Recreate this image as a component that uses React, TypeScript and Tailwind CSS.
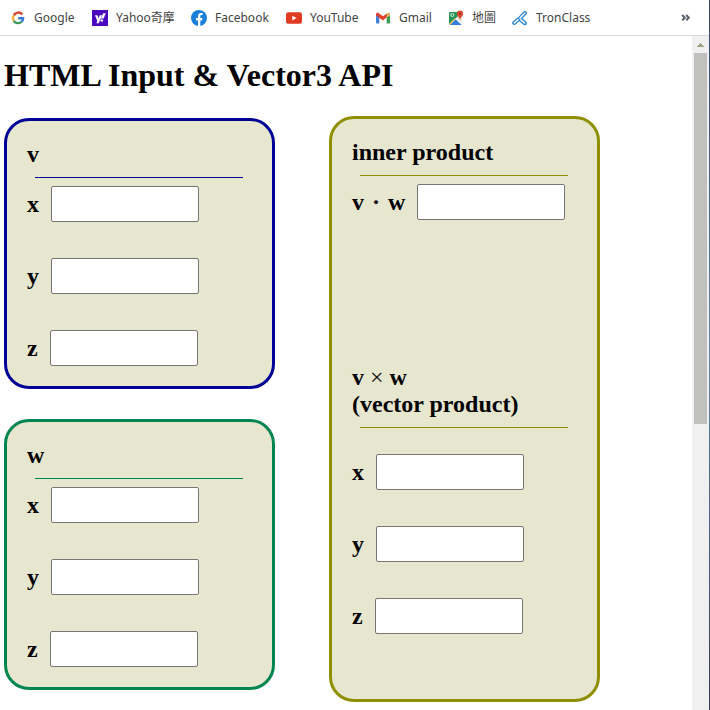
import type { ReactNode } from "react";

const GoogleIcon = () => (
  <svg width="16" height="16" viewBox="0 0 16 16" fill="none" strokeWidth="2.4">
    <path d="M12.2 4.4A5 5 0 0 0 3.8 5.4" stroke="#d8432f" />
    <path d="M3.8 5.4A5 5 0 0 0 3.8 10.8" stroke="#efb23a" />
    <path d="M3.8 10.8A5 5 0 0 0 11.3 11.9" stroke="#3d9a55" />
    <path d="M8.2 8.2H13.1C13.1 9.8 12.4 11.1 11.3 11.9" stroke="#3b78d8" />
  </svg>
);

const YahooIcon = () => (
  <svg width="16" height="16" viewBox="0 0 16 16">
    <rect width="16" height="16" fill="#4a08c0" />
    <path d="M3 5.3h2.4l1.2 3 1.2-3h2.3l-3.4 7.9H4.4l.9-2.1z" fill="#fff" />
    <path d="M11.2 3.2h2.6l-2.3 5.3H9z" fill="#fff" />
    <circle cx="9.8" cy="10.5" r="1.3" fill="#fff" />
  </svg>
);

const FacebookIcon = () => (
  <svg width="16" height="16" viewBox="0 0 16 16">
    <circle cx="8" cy="8" r="8" fill="#1a7fdb" />
    <path d="M7 16v-5.6H4.9V8H7V6.2C7 4.1 8.2 3 10 3l1.6.1v2h-1c-1 0-1.3.6-1.3 1.3V8h2.2l-.4 2.4H9.3V16z" fill="#fff" />
  </svg>
);

const YouTubeIcon = () => (
  <svg width="16" height="16" viewBox="0 0 16 16">
    <rect y="2.3" width="16" height="11.5" rx="2.4" fill="#e03a22" />
    <path d="M6.3 5.7v4.7l4.3-2.35z" fill="#fff" />
  </svg>
);

const GmailIcon = () => (
  <svg width="16" height="16" viewBox="0 0 16 16">
    <path d="M1 4.5l3.3 2.4v6.6H2a1 1 0 0 1-1-1z" fill="#3f80dd" />
    <path d="M15 4.5l-3.3 2.4v6.6H14a1 1 0 0 0 1-1z" fill="#3a9b50" />
    <path d="M1 4.5C1 2.7 2.6 2.3 3.8 3.2L8 6.3l4.2-3.1v3.9L8 10.6 1 5.4z" fill="#df4330" />
    <path d="M11.7 3.6l.6-.4C13.6 2.2 15 2.9 15 4.5v.8l-3.3 2.4z" fill="#e5b35c" />
  </svg>
);

const MapsIcon = () => (
  <svg width="16" height="16" viewBox="0 0 16 16">
    <rect x="1" y="2" width="13" height="13" rx="1" fill="#e5e4df" />
    <path d="M1 3a1 1 0 0 1 1-1h8v4L1 14.5z" fill="#279557" />
    <path d="M1.7 15l6-5.8 5.9 5.8z" fill="#347fe0" />
    <path d="M8.3 8.7l5.7 5.5" stroke="#fff" strokeWidth="1.1" />
    <path d="M1.2 14.5L7.5 8.4" stroke="#f4c553" strokeWidth="1.2" />
    <circle cx="4.3" cy="5" r="1.5" fill="none" stroke="#d5eddc" />
    <path d="M12 .6a3.1 3.1 0 0 0-3.1 3.2c0 2.6 2.6 3.1 3.1 6.4.5-3.3 3.1-3.8 3.1-6.4A3.1 3.1 0 0 0 12 .6z" fill="#dd4a31" />
    <circle cx="12" cy="3.8" r="1.1" fill="#963022" />
  </svg>
);

const TronIcon = () => (
  <svg width="16" height="16" viewBox="0 0 16 16" fill="none" strokeLinecap="round">
    <path d="M13 2.9L7.9 8.3M6.4 9.3L2.2 13M8.6 9.6L12.8 13.1" stroke="#2684d2" strokeWidth="4" />
    <path d="M12.9 3L8.1 8.1M6.2 9.5L2.3 12.9M8.8 9.8L12.7 13" stroke="#fff" strokeWidth="1.5" />
  </svg>
);

function Bookmark({ icon, label, width }: { icon: ReactNode; label: string; width: string }) {
  return (
    <div className={`flex h-4 shrink-0 items-center gap-2 whitespace-nowrap ${width}`}>
      <span className="block h-4 w-4 shrink-0">{icon}</span>
      <span>{label}</span>
    </div>
  );
}

function Field({ label, id }: { label: string; id: string }) {
  return (
    <div className="flex h-9 items-center">
      <label htmlFor={id} className="mr-3 whitespace-pre [word-spacing:2px]">{label}</label>
      <input id={id} className="h-9 w-[148px] rounded-[2px] border border-[#767676] bg-white px-1 outline-none" />
    </div>
  );
}

function VectorCard({ name, border, line }: { name: string; border: string; line: string }) {
  return (
    <section className={`h-[271px] w-[271px] rounded-[25px] border-[3px] bg-[#e7e7d0] px-5 pt-5 ${border}`}>
      <h2 className="h-[27px] leading-[27px]">{name}</h2>
      <div className={`mx-2 mt-[9px] h-px w-[208px] ${line}`} />
      <div className="mt-2 flex flex-col gap-9">
        <Field label="x" id={`${name}-x`} />
        <Field label="y" id={`${name}-y`} />
        <Field label="z" id={`${name}-z`} />
      </div>
    </section>
  );
}

export default function App() {
  return (
    <div className="flex h-[710px] w-[710px] overflow-hidden bg-white">
      <div className="flex w-[709px] flex-col">
        <nav className="flex h-9 shrink-0 items-center border-b border-[#dadada] pl-[10px] font-['Noto_Sans','Noto_Sans_CJK_TC',sans-serif] text-[12px] text-[#444]">
          <Bookmark icon={<GoogleIcon />} label="Google" width="w-[82px]" />
          <Bookmark icon={<YahooIcon />} label="Yahoo奇摩" width="w-[99px]" />
          <Bookmark icon={<FacebookIcon />} label="Facebook" width="w-[95px]" />
          <Bookmark icon={<YouTubeIcon />} label="YouTube" width="w-[89px]" />
          <Bookmark icon={<GmailIcon />} label="Gmail" width="w-[73px]" />
          <Bookmark icon={<MapsIcon />} label="地圖" width="w-[64px]" />
          <Bookmark icon={<TronIcon />} label="TronClass" width="w-[90px]" />
          <svg className="mr-[18px] ml-auto" width="10" height="10" viewBox="0 0 10 10" fill="none" stroke="#56606c" strokeWidth="2">
            <path d="M1.2 2l2.6 2.7-2.6 2.7M5.2 2l2.6 2.7-2.6 2.7" />
          </svg>
        </nav>
        <div className="flex min-h-0 flex-1">
          <main className="w-[692px] pl-1 font-['Liberation_Serif','Times_New_Roman',serif] text-black">
            <h1 className="mt-[21px] h-[37px] text-[32px] leading-[37px] font-bold">HTML Input &amp; Vector3 API</h1>
            <div className="mt-[22px] flex items-start gap-[54px] text-[24px] leading-[27px] font-bold">
              <div className="mt-0.5 flex flex-col gap-[30px]">
                <VectorCard name="v" border="border-[#000099]" line="bg-[#000099]" />
                <VectorCard name="w" border="border-[#008550]" line="bg-[#008550]" />
              </div>
              <section className="h-[586px] w-[271px] rounded-[25px] border-[3px] border-[#8f8f00] bg-[#e7e7d0] px-5 pt-5">
                <h2>inner product</h2>
                <div className="mx-2 mt-[9px] mb-2 h-px w-[208px] bg-[#8f8f00]" />
                <Field label="v · w" id="inner" />
                <h2 className="mt-36">
                  v <span className="font-normal">×</span> w<br />(vector product)
                </h2>
                <div className="mx-2 mt-[9px] h-px w-[208px] bg-[#8f8f00]" />
                <div className="mt-[26px] flex flex-col gap-9">
                  <Field label="x" id="cross-x" />
                  <Field label="y" id="cross-y" />
                  <Field label="z" id="cross-z" />
                </div>
              </section>
            </div>
          </main>
          <aside className="flex w-[17px] flex-col items-center bg-[#f0f0f0]">
            <svg width="17" height="17" viewBox="0 0 17 17" shapeRendering="crispEdges">
              <path d="M8 7h1v1h1v1h1v1h1v1H5v-1h1V9h1V8h1z" fill="#a0a083" />
            </svg>
            <div className="h-[371px] w-[13px] bg-[#c0c0bf]" />
          </aside>
        </div>
      </div>
      <div className="w-px bg-gradient-to-b from-[#354868] via-[#5e87ab] to-[#303b54]" />
    </div>
  );
}
